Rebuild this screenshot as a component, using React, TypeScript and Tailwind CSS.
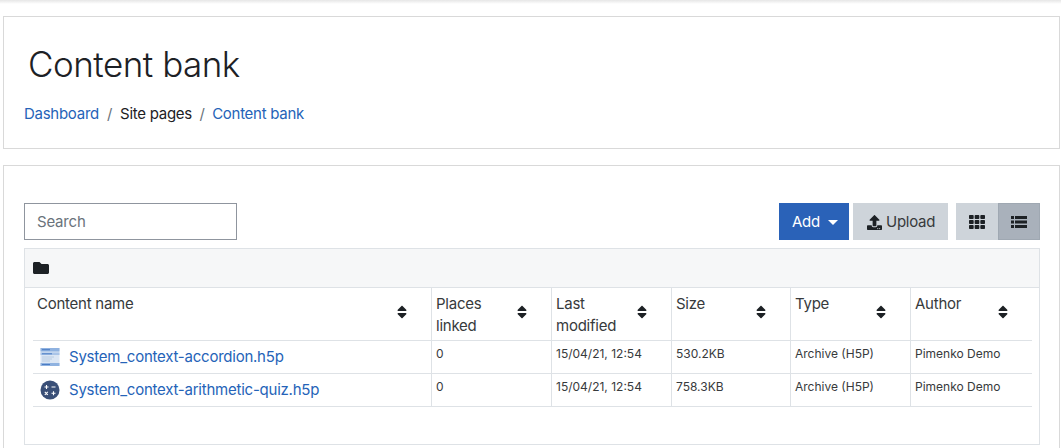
import { FaFolder, FaUpload, FaTh, FaSort } from "react-icons/fa";

const link = "text-[#2563b8]";

function Sort() {
  return <FaSort className="text-[16px] text-[#1d2125] shrink-0" />;
}

function Head({ label, first, w }: { label: React.ReactNode; first?: boolean; w: string }) {
  return (
    <div className={`${w} flex items-start justify-between pt-[5px] pl-[4px] pr-[21px] leading-[22px] ${first ? "" : "border-l border-[#dee2e6]"}`}>
      <div>{label}</div>
      <div className="mt-[11px]"><Sort /></div>
    </div>
  );
}

function AccordionIcon() {
  return (
    <svg width="20" height="20" viewBox="0 0 20 20" className="shrink-0">
      <rect x="0.5" y="1" width="19" height="18" fill="#dbe6f4" />
      <rect x="0.5" y="1" width="19" height="3.5" fill="#8fb2e0" />
      <rect x="2" y="2.2" width="8" height="1" fill="#4b7cc4" />
      <rect x="0.5" y="5.5" width="19" height="2.5" fill="#a9c4e8" />
      <rect x="2" y="6.3" width="10" height="1" fill="#4b7cc4" />
      <rect x="2" y="9.5" width="12" height="1" fill="#b9cbe2" />
      <rect x="2" y="11.5" width="10" height="1" fill="#b9cbe2" />
      <rect x="2" y="13.5" width="8" height="1" fill="#b9cbe2" />
      <rect x="0.5" y="16" width="19" height="3" fill="#8fb2e0" />
      <rect x="2" y="17" width="8" height="1" fill="#4b7cc4" />
    </svg>
  );
}

function QuizIcon() {
  return (
    <svg width="20" height="20" viewBox="0 0 20 20" className="shrink-0">
      <circle cx="10" cy="10" r="9.5" fill="#3a4f77" />
      <path d="M4.5 7h4M6.5 5v4M11.5 7h4M4.8 11.8l3 3M7.8 11.8l-3 3M11.5 13.3h4M13.5 11.3v4" stroke="#fff" strokeWidth="1.1" fill="none" />
    </svg>
  );
}

function ListIcon() {
  return (
    <svg width="16" height="14" viewBox="0 0 16 14" className="text-[#1d2125]" fill="currentColor">
      <rect x="0" y="1" width="3" height="3" />
      <rect x="4" y="1" width="12" height="3" />
      <rect x="0" y="5.5" width="3" height="3" />
      <rect x="4" y="5.5" width="12" height="3" />
      <rect x="0" y="10" width="3" height="3" />
      <rect x="4" y="10" width="12" height="3" />
    </svg>
  );
}

function Row({ icon, name, size }: { icon: React.ReactNode; name: string; size: string }) {
  const cell = "border-l border-[#dee2e6] pl-[4px] pt-[4px] text-[12px] leading-[18px]";
  return (
    <div className="flex h-[33px] border-b border-[#dee2e6] text-[#373a3c]">
      <div className="w-[398px] flex items-center pl-[7px] gap-[9px]">
        {icon}
        <span className={`${link} text-[15px] tracking-[-0.235px]`}>{name}</span>
      </div>
      <div className={`w-[120px] ${cell}`}>0</div>
      <div className={`w-[120px] ${cell}`}>15/04/21, 12:54</div>
      <div className={`w-[119px] ${cell}`}>{size}</div>
      <div className={`w-[120px] ${cell}`}>Archive (H5P)</div>
      <div className={`flex-1 ${cell}`}>Pimenko Demo</div>
    </div>
  );
}

export default function App() {
  return (
    <div className="h-[448px] overflow-hidden bg-white text-[#1d2125] font-['Inter','Liberation_Sans',sans-serif]">
      <div className="h-[4px] bg-gradient-to-b from-[#e6e6e6] to-white" />
      <div className="ml-[3px] mr-[1px] mt-[12px] h-[133px] border border-[#d9d9d9] pl-[20px]">
        <h1 className="pl-[4px] pt-[23px] text-[35px] leading-[48px] font-light tracking-[-0.5px]">Content bank</h1>
        <div className="mt-[15px] flex items-center text-[15px] leading-[22px] tracking-[-0.27px]">
          <span className={link}>Dashboard</span>
          <span className="px-[8px] text-[#6a737b]">/</span>
          <span>Site pages</span>
          <span className="px-[7.5px] text-[#6a737b]">/</span>
          <span className={link}>Content bank</span>
        </div>
      </div>
      <div className="ml-[3px] mr-[1px] mt-[16px] h-[300px] border border-[#d9d9d9] pl-[20px] pr-[19px] pt-[37px]">
        <div className="flex items-start justify-between">
          <div className="w-[213px] h-[37px] border border-[#8f959e] flex items-center pl-[12px] pt-[1px] text-[15px] text-[#6a737b] tracking-[-0.2px]">Search</div>
          <div className="flex">
            <div className="w-[70px] h-[37px] bg-[#2a62b8] text-white text-[15px] flex items-center pl-[13px] pt-[1px] tracking-[-0.25px]">
              Add
              <span className="ml-[8px] border-x-[5px] border-x-transparent border-t-[5px] border-t-white" />
            </div>
            <div className="ml-[4px] w-[95px] h-[37px] bg-[#ced4da] text-[#373a3c] text-[15px] flex items-center pl-[14px] pt-[1px] gap-[4px] tracking-[-0.25px]">
              <FaUpload className="text-[15px] text-[#1d2125]" />
              Upload
            </div>
            <div className="ml-[8px] w-[42px] h-[37px] bg-[#ced4da] flex items-center justify-center">
              <FaTh className="text-[16px] text-[#1d2125]" />
            </div>
            <div className="w-[42px] h-[37px] bg-[#a9b1bb] border border-[#9fa8b2] flex items-center justify-center">
              <ListIcon />
            </div>
          </div>
        </div>
        <div className="mt-[8px] h-[197px] border border-[#dee2e6] pl-[8px] pr-[7px]">
          <div className="-ml-[8px] -mr-[7px] h-[39px] bg-[#f6f7f8] border-b border-[#dee2e6] flex items-center pl-[8px]">
            <FaFolder className="text-[16px] text-[#1d2125]" />
          </div>
          <div className="flex h-[53px] border-b border-[#dee2e6] text-[15px] text-[#373a3c] tracking-[-0.25px]">
            <Head first w="w-[398px]" label="Content name" />
            <Head w="w-[120px]" label={<>Places<br />linked</>} />
            <Head w="w-[120px]" label={<>Last<br />modified</>} />
            <Head w="w-[119px]" label="Size" />
            <Head w="w-[120px]" label="Type" />
            <Head w="flex-1" label="Author" />
          </div>
          <Row icon={<AccordionIcon />} name="System_context-accordion.h5p" size="530.2KB" />
          <Row icon={<QuizIcon />} name="System_context-arithmetic-quiz.h5p" size="758.3KB" />
        </div>
      </div>
    </div>
  );
}
